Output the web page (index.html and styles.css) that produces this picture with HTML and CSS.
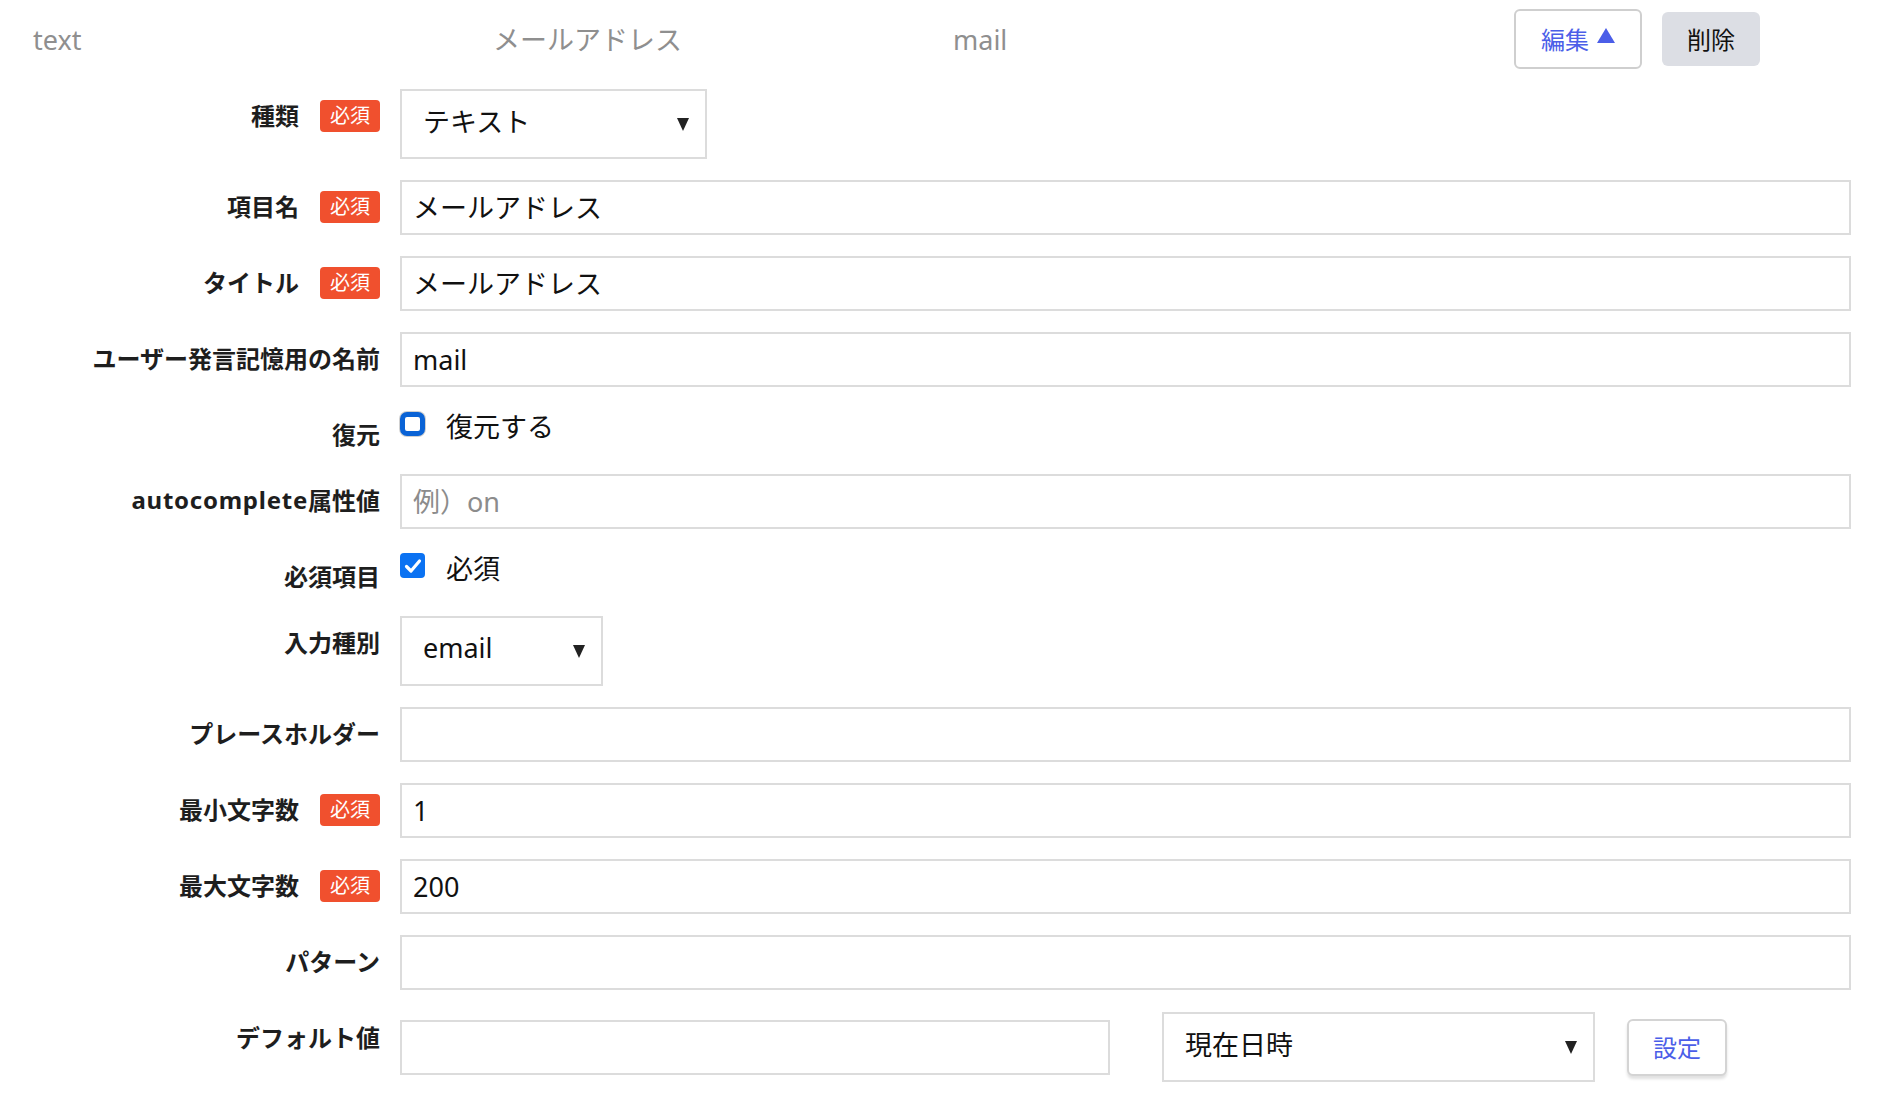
FILE: index.html
```html
<!DOCTYPE html>
<html lang="ja">
<head>
<meta charset="utf-8">
<title>項目編集</title>
<link rel="stylesheet" href="styles.css">
</head>
<body>
<div class="page">
  <div class="header">
    <div class="hcol">text</div>
    <div class="hcol">メールアドレス</div>
    <div class="hcol">mail</div>
    <div class="hbtns">
      <div class="btn-edit">編集 <span class="tri-up"></span></div>
      <div class="btn-del">削除</div>
    </div>
  </div>

  <div class="form">
    <div class="row">
      <div class="label"><span>種類</span><span class="badge">必須</span></div>
      <div class="ctrl"><div class="select w-type">テキスト<span class="arrow"></span></div></div>
    </div>
    <div class="row">
      <div class="label"><span>項目名</span><span class="badge">必須</span></div>
      <div class="ctrl"><div class="input">メールアドレス</div></div>
    </div>
    <div class="row">
      <div class="label"><span>タイトル</span><span class="badge">必須</span></div>
      <div class="ctrl"><div class="input">メールアドレス</div></div>
    </div>
    <div class="row">
      <div class="label"><span>ユーザー発言記憶用の名前</span></div>
      <div class="ctrl"><div class="input">mail</div></div>
    </div>
    <div class="row">
      <div class="label"><span>復元</span></div>
      <div class="ctrl check">
        <span class="cb-off"></span><span class="cb-text">復元する</span>
      </div>
    </div>
    <div class="row">
      <div class="label"><span class="wide">autocomplete</span><span class="tight">属性値</span></div>
      <div class="ctrl"><div class="input ph">例）on</div></div>
    </div>
    <div class="row">
      <div class="label"><span>必須項目</span></div>
      <div class="ctrl check">
        <span class="cb-on"><svg viewBox="0 0 24 24" width="24" height="24"><path d="M5.5 12.5 L10 17 L18.5 7" fill="none" stroke="#fff" stroke-width="3.2" stroke-linecap="round" stroke-linejoin="round"/></svg></span><span class="cb-text">必須</span>
      </div>
    </div>
    <div class="row">
      <div class="label"><span>入力種別</span></div>
      <div class="ctrl"><div class="select w-input">email<span class="arrow"></span></div></div>
    </div>
    <div class="row">
      <div class="label"><span>プレースホルダー</span></div>
      <div class="ctrl"><div class="input"></div></div>
    </div>
    <div class="row">
      <div class="label"><span>最小文字数</span><span class="badge">必須</span></div>
      <div class="ctrl"><div class="input">1</div></div>
    </div>
    <div class="row">
      <div class="label"><span>最大文字数</span><span class="badge">必須</span></div>
      <div class="ctrl"><div class="input">200</div></div>
    </div>
    <div class="row">
      <div class="label"><span>パターン</span></div>
      <div class="ctrl"><div class="input"></div></div>
    </div>
    <div class="row">
      <div class="label"><span>デフォルト値</span></div>
      <div class="ctrl multi">
        <div class="input w-default"></div>
        <div class="select w-now">現在日時<span class="arrow"></span></div>
        <div class="btn-set">設定</div>
      </div>
    </div>
  </div>
</div>
</body>
</html>
```

FILE: styles.css
```css
html, body {
  margin: 0;
  padding: 0;
  background: #ffffff;
}

body {
  font-family: "Noto Sans", "Noto Sans CJK JP", sans-serif;
  color: #1e1e1e;
}

.page {
  width: 1898px;
}

/* header */
.header {
  height: 78px;
  display: flex;
  align-items: center;
  padding-left: 33px;
  padding-right: 138px;
}

.hcol {
  width: 460px;
  font-size: 27px;
  color: #8f8f8f;
  line-height: 36px;
  padding-top: 2px;
}

.hcol:nth-child(3) {
  width: auto;
}

.hbtns {
  margin-left: auto;
  display: flex;
  align-items: center;
  gap: 20px;
}

.btn-edit {
  box-sizing: border-box;
  width: 128px;
  height: 60px;
  border: 2px solid #cfcfcf;
  border-radius: 6px;
  color: #4b5ee8;
  font-size: 24px;
  display: flex;
  align-items: center;
  justify-content: center;
  gap: 8px;
  padding-bottom: 2px;
}

.tri-up {
  width: 0;
  height: 0;
  border-left: 9px solid transparent;
  border-right: 9px solid transparent;
  border-bottom: 15px solid #4b5ee8;
  margin-top: -5px;
}

.btn-del {
  box-sizing: border-box;
  width: 98px;
  height: 54px;
  border-radius: 6px;
  background: #dcdee4;
  color: #111;
  font-size: 24px;
  display: flex;
  align-items: center;
  justify-content: center;
  padding-bottom: 2px;
}

/* form */
.form {
  margin-top: 11px;
  display: flex;
  flex-direction: column;
  gap: 21px;
}

.row {
  display: grid;
  grid-template-columns: 380px 1451px;
  column-gap: 20px;
  align-items: start;
}

.label {
  display: flex;
  justify-content: flex-end;
  align-items: center;
  gap: 21px;
  padding-top: 7px;
  padding-bottom: 2px;
  height: 36px;
  font-size: 24px;
  font-weight: 700;
  color: #1e1e1e;
  white-space: nowrap;
}

.label .wide {
  letter-spacing: 0.75px;
}

.label .wide + .tight {
  margin-left: -21px;
}

.badge {
  height: 32px;
  line-height: 32px;
  padding: 0 10px;
  border-radius: 4px;
  background: #f0502e;
  color: #fff;
  font-size: 20px;
  font-weight: 400;
  margin-top: 4px;
}

.ctrl {
  display: flex;
}

.input {
  box-sizing: border-box;
  width: 1451px;
  height: 55px;
  border: 2px solid #dcdcdc;
  padding: 0 11px;
  font-size: 27px;
  line-height: 51px;
  color: #111;
  white-space: nowrap;
}

.input.ph {
  color: #8c8c8c;
}

.select {
  box-sizing: border-box;
  height: 70px;
  border: 2px solid #dcdcdc;
  padding: 0 16px 7px 21px;
  font-size: 27px;
  color: #111;
  display: flex;
  align-items: center;
  justify-content: space-between;
  white-space: nowrap;
}

.arrow {
  width: 0;
  height: 0;
  border-left: 6px solid transparent;
  border-right: 6px solid transparent;
  border-top: 13px solid #222;
  margin-top: 8px;
}

.w-type { width: 307px; }
.w-input { width: 203px; }
.w-now { width: 433px; }
.w-default { width: 710px; }

/* checkbox rows */
.check {
  align-items: flex-start;
  gap: 21px;
  padding-top: 1px;
}

.cb-off {
  box-sizing: border-box;
  width: 25px;
  height: 24px;
  margin-top: 3px;
  border: 5px solid #0a63d6;
  border-radius: 7px;
  background: #fff;
  box-shadow: 0 0 0 1px #d0d0d0;
}

.cb-on {
  width: 25px;
  height: 25px;
  margin-top: 2px;
  border-radius: 4px;
  background: #0b72f2;
  display: flex;
  align-items: center;
  justify-content: center;
}

.cb-on svg {
  display: block;
}

.cb-text {
  font-size: 27px;
  line-height: 36px;
  color: #111;
}

/* default value row */
.multi {
  align-items: center;
  margin-top: 1px;
}

.multi .w-now {
  margin-left: 52px;
}

.btn-set {
  box-sizing: border-box;
  margin-left: 32px;
  width: 100px;
  height: 57px;
  border: 2px solid #d4d4d4;
  border-radius: 6px;
  box-shadow: 0 3px 3px rgba(0, 0, 0, 0.12);
  color: #4b5ee8;
  font-size: 24px;
  display: flex;
  align-items: center;
  justify-content: center;
  background: #fff;
  padding-bottom: 2px;
}
```
